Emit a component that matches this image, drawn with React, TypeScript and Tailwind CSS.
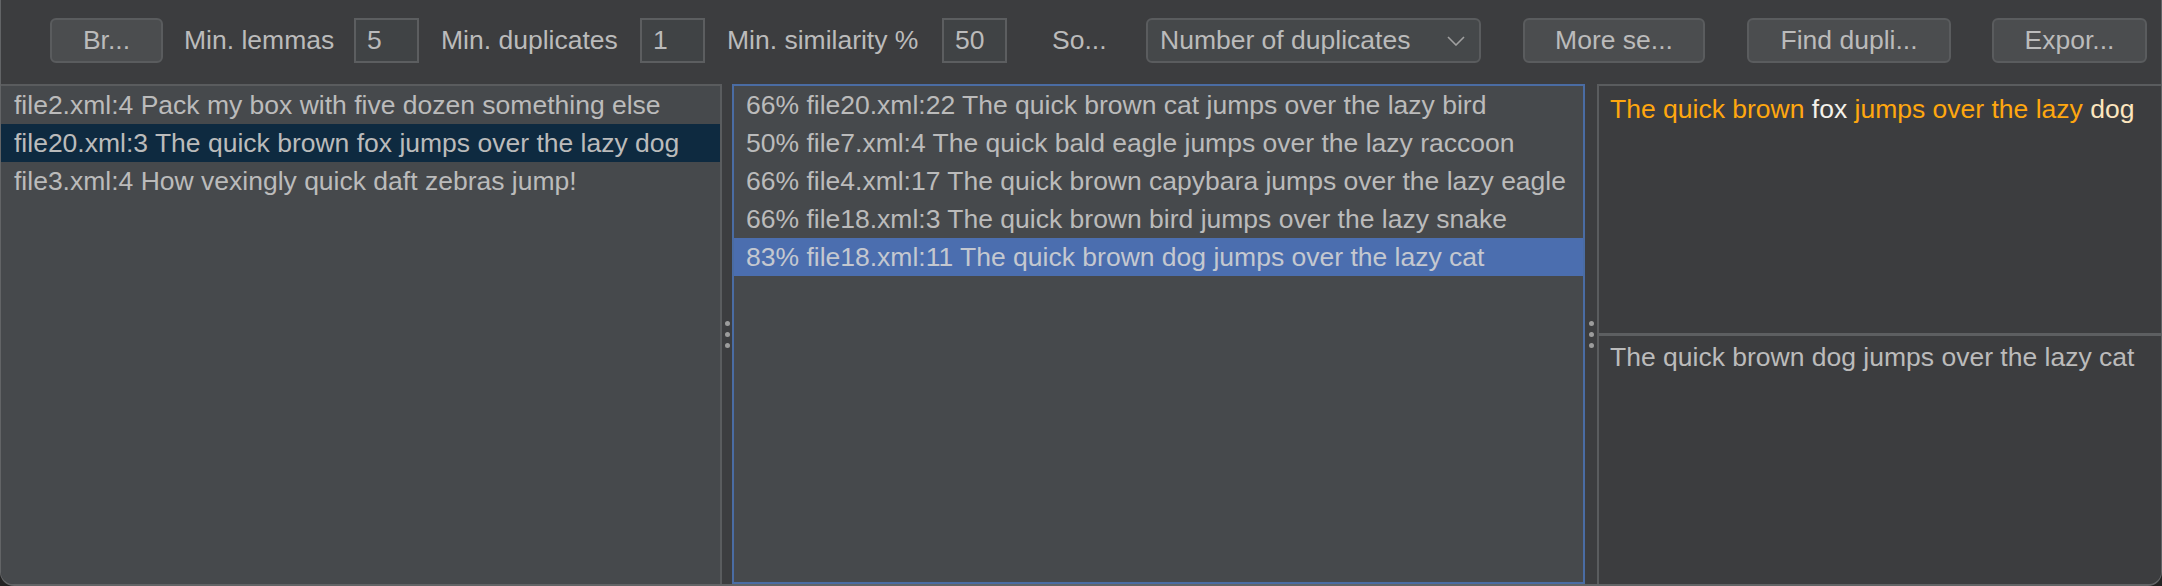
import type { ReactNode } from 'react';

const files = [
  'file2.xml:4 Pack my box with five dozen something else',
  'file20.xml:3 The quick brown fox jumps over the lazy dog',
  'file3.xml:4 How vexingly quick daft zebras jump!',
];

const matches = [
  '66% file20.xml:22 The quick brown cat jumps over the lazy bird',
  '50% file7.xml:4 The quick bald eagle jumps over the lazy raccoon',
  '66% file4.xml:17 The quick brown capybara jumps over the lazy eagle',
  '66% file18.xml:3 The quick brown bird jumps over the lazy snake',
  '83% file18.xml:11 The quick brown dog jumps over the lazy cat',
];

const Button = ({ className, children }: { className: string; children: ReactNode }) => (
  <button
    className={`h-[45px] shrink-0 rounded-[6px] border-2 border-[#5a5c5e] bg-[#4b4d4f] text-center leading-[41px] text-[#bbbbbb] ${className}`}
  >
    {children}
  </button>
);

const Field = ({ className, value }: { className: string; value: string }) => (
  <div
    className={`h-[45px] w-[65px] shrink-0 border-2 border-[#5c5e60] bg-[#404345] pl-[11px] leading-[41px] text-[#bbbbbb] ${className}`}
  >
    {value}
  </div>
);

const Label = ({ className, children }: { className: string; children: ReactNode }) => (
  <span className={`shrink-0 whitespace-nowrap leading-[45px] text-[#bbbbbb] ${className}`}>{children}</span>
);

const Grip = ({ className }: { className: string }) => (
  <div className={`flex shrink-0 items-center justify-center bg-[#3c3d3f] ${className}`}>
    <div className="flex flex-col gap-[6px]">
      <span className="size-[5px] rounded-full bg-[#9c9c9c]" />
      <span className="size-[5px] rounded-full bg-[#9c9c9c]" />
      <span className="size-[5px] rounded-full bg-[#9c9c9c]" />
    </div>
  </div>
);

export default function App() {
  return (
    <div className="h-[586px] w-[2162px] bg-[#232323] font-['Liberation_Sans',Arial,sans-serif] text-[26.5px]">
      <div className="flex h-full flex-col overflow-hidden rounded-b-[14px] border-x border-b-2 border-[#626466] bg-[#3c3d3f]">
        {/* Toolbar */}
        <div className="flex h-[84px] shrink-0 items-start pl-[49px] pt-[18px]">
          <Button className="w-[113px]">Br...</Button>
          <Label className="ml-[21px] w-[149px]">Min. lemmas</Label>
          <Field className="ml-[21px]" value="5" />
          <Label className="ml-[22px] w-[177px]">Min. duplicates</Label>
          <Field className="ml-[22px]" value="1" />
          <Label className="ml-[22px] w-[194px]">Min. similarity %</Label>
          <Field className="ml-[21px]" value="50" />
          <Label className="ml-[45px] w-[52px]">So...</Label>
          <div className="ml-[42px] flex h-[45px] w-[335px] shrink-0 items-center justify-between rounded-[6px] border-2 border-[#5a5c5e] bg-[#45484a] pl-[12px] pr-[14px] text-[#bbbbbb]">
            <span>Number of duplicates</span>
            <svg width="18" height="10" viewBox="0 0 18 10" fill="none">
              <path d="M1 1l8 8 8-8" stroke="#a0a0a0" strokeWidth="1.6" />
            </svg>
          </div>
          <Button className="ml-[42px] w-[182px]">More se...</Button>
          <Button className="ml-[42px] w-[204px]">Find dupli...</Button>
          <Button className="ml-[41px] w-[155px]">Expor...</Button>
        </div>

        {/* Panels */}
        <div className="flex min-h-0 flex-1">
          <div className="w-[721px] shrink-0 border-r-2 border-t-2 border-[#5a5c5e] bg-[#46494c] text-[#bbbbbb]">
            {files.map((f, i) => (
              <div
                key={f}
                className={`h-[38px] whitespace-nowrap pl-[13px] leading-[38px] ${i === 1 ? 'bg-[#0e2a40]' : ''}`}
              >
                {f}
              </div>
            ))}
          </div>

          <Grip className="w-[10px]" />

          <div className="w-[853px] shrink-0 border-2 border-[#4a6ca3] bg-[#46494c] text-[#bbbbbb]">
            {matches.map((m, i) => (
              <div
                key={m}
                className={`h-[38px] whitespace-nowrap pl-[12px] leading-[38px] ${i === 4 ? 'bg-[#4b6eaf] text-[#c4c8d0]' : ''}`}
              >
                {m}
              </div>
            ))}
          </div>

          <Grip className="w-[12px]" />

          <div className="flex min-w-0 flex-1 flex-col border-l-2 border-t-2 border-[#5a5c5e] bg-[#3c3d3f]">
            <div className="h-[247px] shrink-0 whitespace-nowrap pl-[11px] pt-[4px] leading-[38px]">
              <span className="text-[#ffa70f]">The quick brown </span>
              <span className="text-[#f4f1ea]">fox </span>
              <span className="text-[#ffa70f]">jumps over the lazy </span>
              <span className="text-[#fde6be]">dog</span>
            </div>
            <div className="h-[3px] shrink-0 bg-[#5d5f61]" />
            <div className="flex-1 whitespace-nowrap pl-[11px] pt-[2px] leading-[38px] text-[#bbbbbb]">
              The quick brown dog jumps over the lazy cat
            </div>
          </div>
        </div>
      </div>
    </div>
  );
}
